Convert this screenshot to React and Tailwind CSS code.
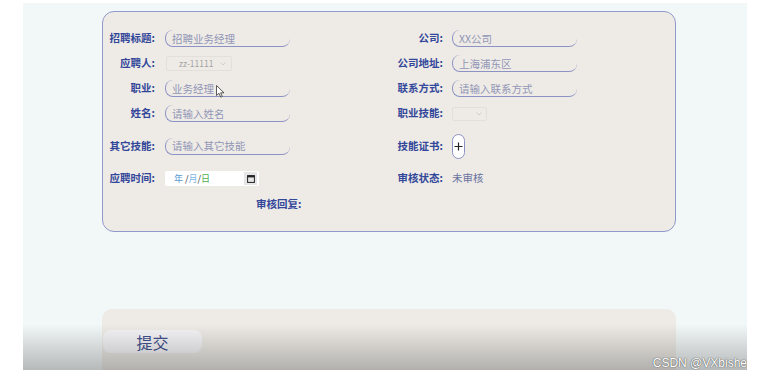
import React from "react";

const font = { fontFamily: '"Noto Sans CJK SC", "Noto Sans", sans-serif' };

const Label = ({ w, children }) => (
  <span className={`${w} shrink-0 text-right text-[10.5px] font-bold text-[#33479a] leading-none`}>{children}</span>
);

const Field = ({ ph }) => (
  <input
    placeholder={ph}
    className="block w-[125px] h-[17px] border-l border-b border-t-0 border-r-0 border-[#8d92c4] rounded-[8px] bg-transparent pl-[6px] text-[10.5px] leading-none outline-none placeholder:text-[#9296b6]"
    style={font}
  />
);

const Chevron = () => (
  <svg width="6" height="4" viewBox="0 0 6 4" className="shrink-0">
    <path d="M0.5 0.5 L3 3 L5.5 0.5" fill="none" stroke="#c8c6c2" strokeWidth="0.8" />
  </svg>
);

const Row = ({ h, left, right }) => (
  <div className={`flex ${h}`}>
    <div className="w-[286px] flex items-center">{left}</div>
    <div className="w-[286px] flex items-center">{right}</div>
  </div>
);

export default function App() {
  return (
    <div className="w-[763px] h-[378px] bg-white pt-[3px] pl-[23px]" style={font}>
      <div className="relative w-[724px] h-[367px] bg-[#f2f7f7] overflow-hidden">
        {/* form card */}
        <div className="ml-[79px] mt-[8px] w-[574px] h-[221px] bg-[#eeebe6] border border-[#9198cc] rounded-[12px] pt-[14px]">
          <Row
            h="h-[25px]"
            left={<><Label w="w-[52px]">招聘标题:</Label><span className="ml-[10px] flex"><Field ph="招聘业务经理" /></span></>}
            right={<><Label w="w-[54px]">公司:</Label><span className="ml-[9px] flex"><Field ph="XX公司" /></span></>}
          />
          <Row
            h="h-[25px]"
            left={
              <>
                <Label w="w-[52px]">应聘人:</Label>
                <span className="ml-[11px] w-[66px] h-[15px] border border-[#e3e0db] rounded-[2px] flex items-center pl-[12px] pr-[5px] justify-between">
                  <span className="text-[8.5px] text-[#a3a3a3] leading-none">zz-11111</span>
                  <Chevron />
                </span>
              </>
            }
            right={<><Label w="w-[54px]">公司地址:</Label><span className="ml-[9px] flex"><Field ph="上海浦东区" /></span></>}
          />
          <Row
            h="h-[25px]"
            left={
              <>
                <Label w="w-[52px]">职业:</Label>
                <span className="ml-[10px] flex relative">
                  <Field ph="业务经理" />
                  <svg width="9" height="13" viewBox="0 0 9 13" className="absolute left-[51px] top-[5px]">
                    <path d="M0.5 0.5 L0.5 10.5 L3 8.3 L4.8 12.2 L6.3 11.5 L4.6 7.8 L8 7.8 Z" fill="#fff" stroke="#333" strokeWidth="0.8" />
                  </svg>
                </span>
              </>
            }
            right={<><Label w="w-[54px]">联系方式:</Label><span className="ml-[9px] flex"><Field ph="请输入联系方式" /></span></>}
          />
          <Row
            h="h-[25px]"
            left={<><Label w="w-[52px]">姓名:</Label><span className="ml-[10px] flex"><Field ph="请输入姓名" /></span></>}
            right={
              <>
                <Label w="w-[54px]">职业技能:</Label>
                <span className="ml-[9px] w-[35px] h-[14px] border border-[#e3e0db] rounded-[2px] flex items-center justify-end pr-[4px]">
                  <Chevron />
                </span>
              </>
            }
          />
          <Row
            h="h-[40px]"
            left={<><Label w="w-[52px]">其它技能:</Label><span className="ml-[10px] flex"><Field ph="请输入其它技能" /></span></>}
            right={
              <>
                <Label w="w-[54px]">技能证书:</Label>
                <button className="ml-[9px] w-[13px] h-[25px] border border-[#8d92c4] rounded-full bg-white flex items-center justify-center">
                  <svg width="9" height="9" viewBox="0 0 9 9">
                    <path d="M4.5 0.5 V8.5 M0.5 4.5 H8.5" stroke="#222" strokeWidth="1.2" />
                  </svg>
                </button>
              </>
            }
          />
          <Row
            h="h-[25px]"
            left={
              <>
                <Label w="w-[52px]">应聘时间:</Label>
                <span className="ml-[10px] w-[94px] h-[15px] bg-white flex items-center pl-[9px] pr-[2px] rounded-[2px]">
                  <span className="text-[9px] leading-none">
                    <span className="text-[#5b9bd5]">年</span>
                    <span className="text-[#333]"> /</span>
                    <span className="text-[#7ab6e6]">月</span>
                    <span className="text-[#333]">/</span>
                    <span className="text-[#4caf50]">日</span>
                  </span>
                  <span className="ml-auto w-[13px] h-[13px] bg-[#e6e6e6] flex items-center justify-center">
                    <svg width="8" height="8" viewBox="0 0 8 8">
                      <rect x="0.6" y="0.6" width="6.8" height="6.8" fill="none" stroke="#222" strokeWidth="1" />
                      <rect x="0.6" y="0.6" width="6.8" height="1.8" fill="#222" />
                    </svg>
                  </span>
                </span>
              </>
            }
            right={
              <>
                <Label w="w-[54px]">审核状态:</Label>
                <span className="ml-[9px] text-[10.5px] text-[#6a73a0] leading-none">未审核</span>
              </>
            }
          />
          <div className="h-[27px] flex items-center">
            <span className="ml-[153px] text-[10.5px] font-bold text-[#33479a] leading-none">审核回复:</span>
          </div>
        </div>

        {/* bottom card */}
        <div className="ml-[79px] mt-[77px] w-[574px] h-[70px] bg-[#eeebe6] rounded-t-[10px] pt-[21px] pl-[1px]">
          <button className="w-[99px] h-[23px] rounded-[8px] bg-[#f5f5f7] text-[16px] text-[#42508f] leading-none flex items-center justify-center">
            提交
          </button>
        </div>

        {/* bottom shade */}
        <div className="absolute left-0 right-0 bottom-0 h-[46px] bg-gradient-to-b from-transparent to-[rgba(0,0,0,0.25)] pointer-events-none" />

        <span
          className="absolute right-0 bottom-[1px] text-[12px] leading-none text-white"
          style={{ fontFamily: '"Liberation Sans", sans-serif', textShadow: "0 0 1px #555, 0 0 1px #555" }}
        >
          CSDN @VXbishe
        </span>
      </div>
    </div>
  );
}
